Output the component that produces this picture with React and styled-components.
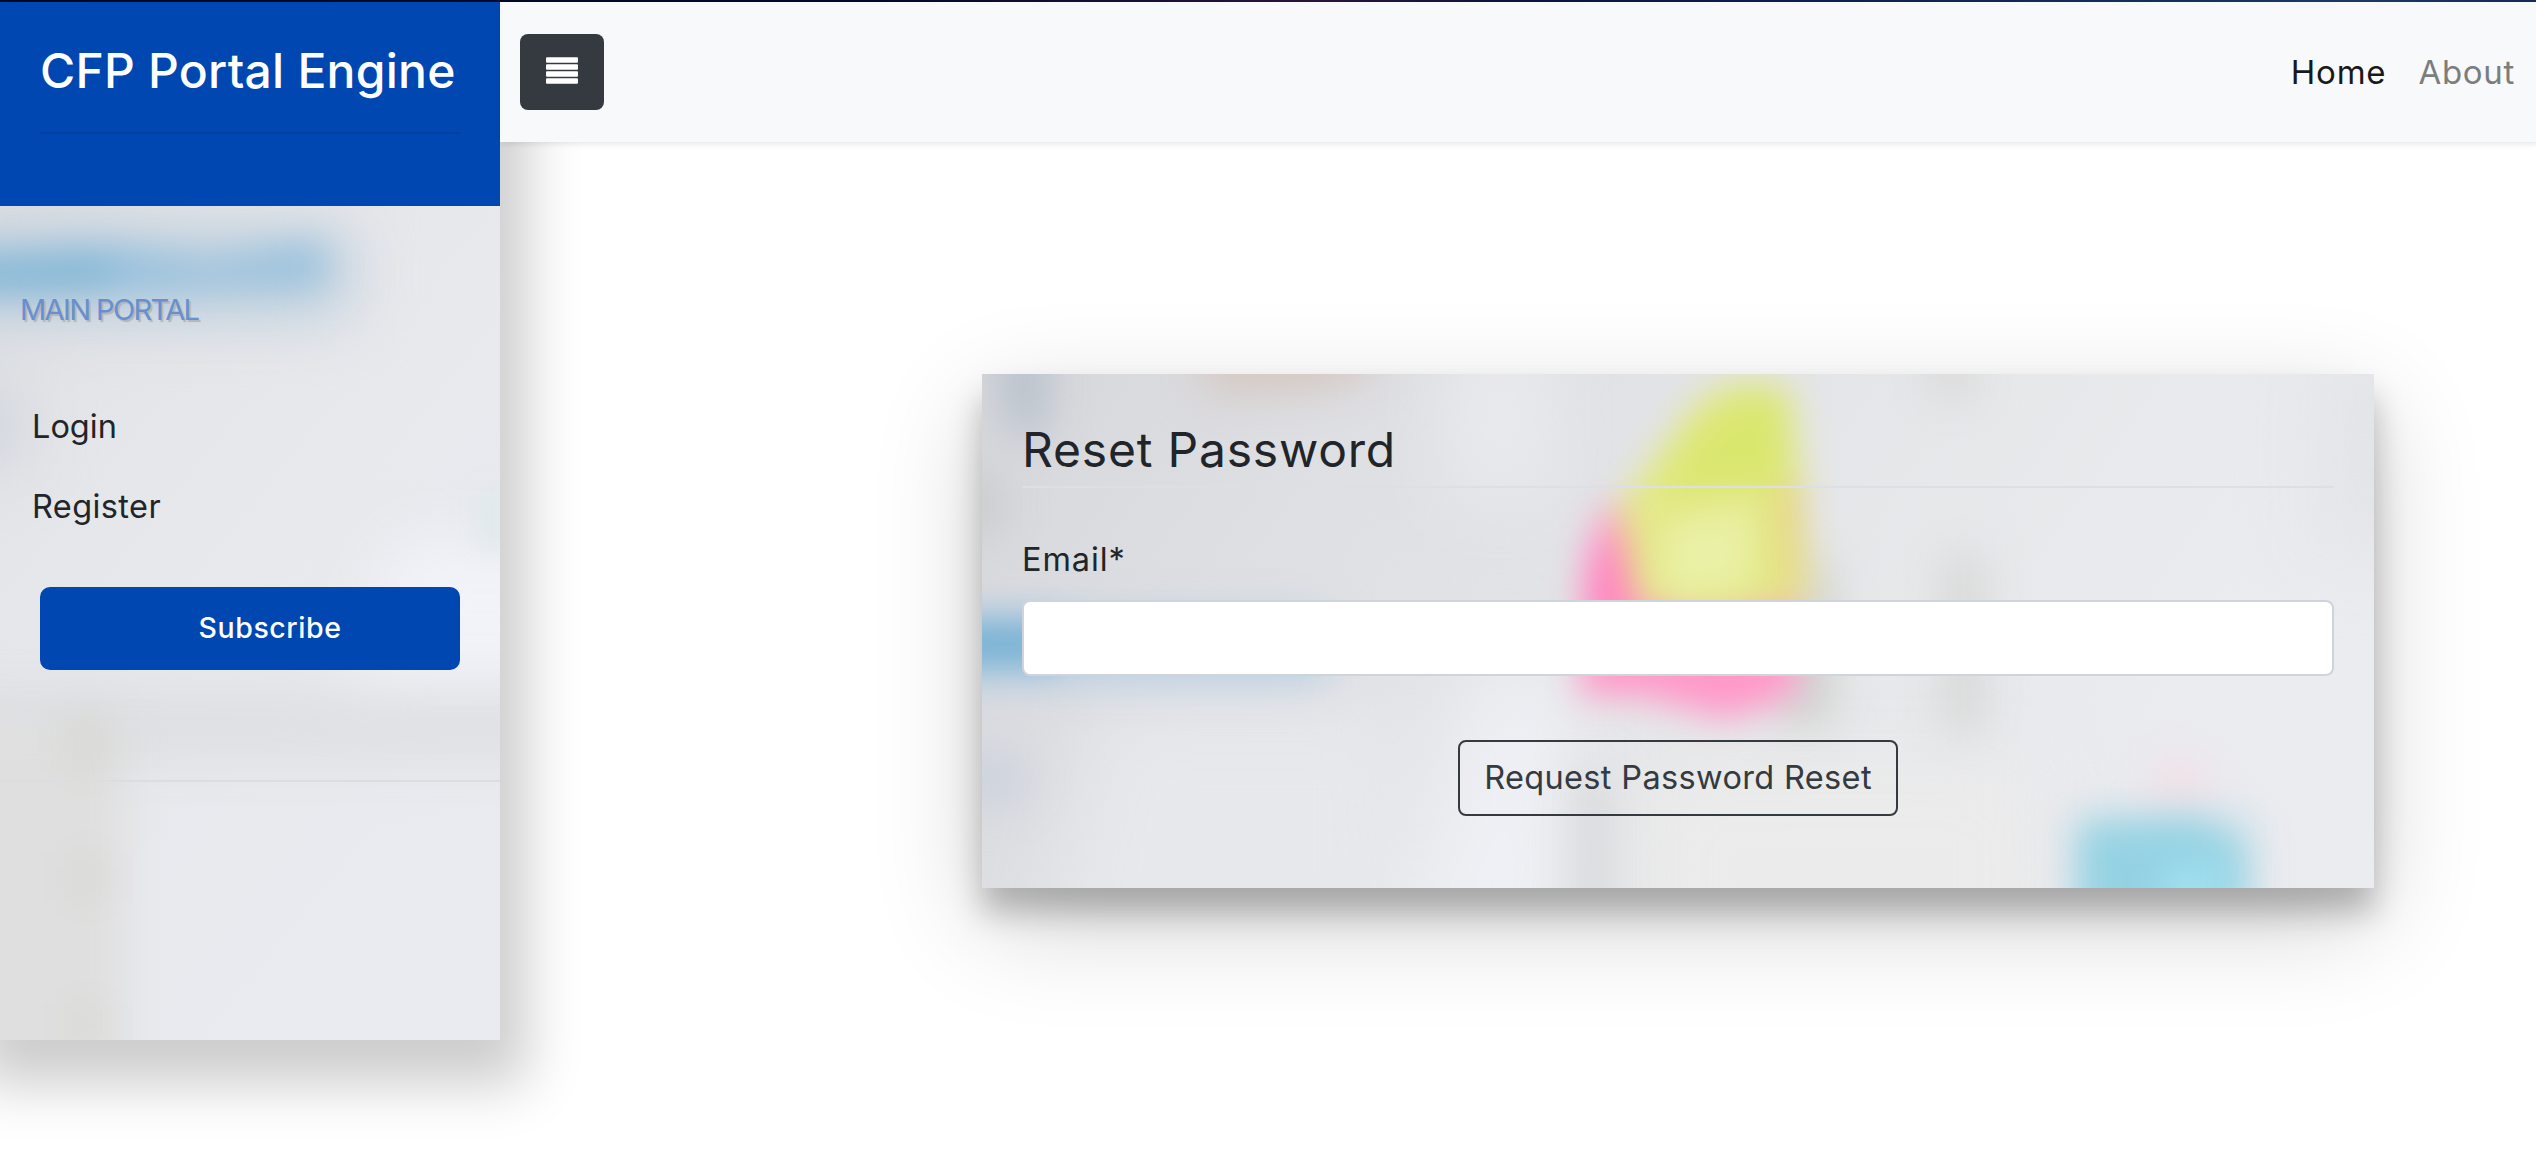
import React from "react";
import styled, { createGlobalStyle } from "styled-components";

const Global = createGlobalStyle`
  *, *::before, *::after { box-sizing: border-box; }
  html, body, #root { height: 100%; }
  body {
    margin: 0;
    background: #fff;
    color: #212529;
    font-family: Inter, "Open Sans", sans-serif;
    font-size: 32.5px;
    line-height: 48px;
    overflow: hidden;
  }
`;

const Page = styled.div`
  display: grid;
  grid-template-columns: 500px 1fr;
  grid-template-rows: 2px 1160px;
`;

const TopStrip = styled.div`
  grid-column: 1 / -1;
  background: linear-gradient(90deg, #010a2c 0%, #030a30 35%, #2a1440 52%, #0d1440 60%, #14305e 85%, #1c3a68 93%, #162b55 100%);
`;

const Sidebar = styled.nav`
  position: relative;
  height: 1038px;
  isolation: isolate;
  box-shadow: 2px 20px 52px 25px rgba(0, 0, 0, 0.2);
`;

const Backdrop = styled.svg`
  position: absolute;
  inset: 0;
  z-index: -1;
  width: 100%;
  height: 100%;

  filter {
    color-interpolation-filters: sRGB;
  }
`;

const Brand = styled.header`
  height: 204px;
  padding: 40px;
  background: #0047b1;
`;

const BrandTitle = styled.h3`
  margin: 0 0 32px;
  color: #fff;
  font-size: 48px;
  font-weight: 540;
  line-height: 58px;
  letter-spacing: 0.25px;
  white-space: nowrap;
`;

const Rule = styled.hr`
  height: 2px;
  margin: 0;
  border: 0;
  background: ${(p) => p.$color};
`;

const SectionTitle = styled.p`
  margin: 0;
  padding: 80px 20px 0;
  color: #6690cf;
  font-size: 29px;
  letter-spacing: -1.6px;
  text-shadow: 2px 2px 1px #b4b4b8;
`;

const Menu = styled.ul`
  display: flex;
  flex-direction: column;
  margin: 0;
  padding: 53px 0 15px;
  list-style: none;
`;

const MenuItem = styled.li`
  height: 80px;
  padding: 16px 32px;
  letter-spacing: ${(p) => p.$tracking}px;
`;

const Subscribe = styled.button`
  display: block;
  width: 420px;
  height: 83px;
  margin: 25px 40px 110px;
  padding: 0 0 2px 40px;
  border: 0;
  border-radius: 10px;
  background: #0047b1;
  color: #fff;
  font: 500 28.5px Inter, sans-serif;
  letter-spacing: 0.55px;
`;

const Main = styled.div`
  display: flex;
  flex-direction: column;
  align-items: flex-start;
  min-width: 0;
`;

const Navbar = styled.header`
  position: relative;
  z-index: 1;
  display: flex;
  align-items: center;
  width: 100%;
  height: 140px;
  padding: 0 21px 0 20px;
  background: #f8f9fb;
  box-shadow: 2px 2px 6px rgba(0, 0, 0, 0.1);
`;

const Toggle = styled.button`
  display: grid;
  place-items: center;
  width: 84px;
  height: 76px;
  padding: 0 0 4px;
  border: 0;
  border-radius: 8px;
  background: #343a40;
`;

const Links = styled.div`
  display: flex;
  gap: 32px;
  margin-left: auto;
`;

const NavLink = styled.a`
  color: ${(p) => (p.$active ? "#181919" : "#7c7d7d")};
  font-size: 33px;
  letter-spacing: ${(p) => (p.$active ? 0.8 : 0.7)}px;
`;

const Card = styled.form`
  position: relative;
  isolation: isolate;
  display: flex;
  flex-direction: column;
  width: 1392px;
  height: 514px;
  margin: 232px 0 0 482px;
  padding: 40px;
  box-shadow: 0 24px 30px rgba(0, 0, 0, 0.24), 0 34px 100px rgba(0, 0, 0, 0.19);
`;

const Legend = styled.h2`
  height: 74px;
  margin: 0 0 36px;
  padding-top: 7px;
  border-bottom: 2px solid #dcdfe6;
  font-size: 48px;
  font-weight: 420;
  line-height: 58px;
  letter-spacing: 0.8px;
`;

const Label = styled.label`
  height: 60px;
  margin-bottom: 16px;
  padding-top: 12px;
  letter-spacing: 0.9px;
`;

const Input = styled.input`
  height: 76px;
  border: 2px solid #ced4da;
  border-radius: 8px;
  background: #fff;
`;

const Submit = styled.button`
  align-self: center;
  width: 440px;
  height: 76px;
  margin-top: 64px;
  padding: 0 0 2px;
  border: 2px solid #343a40;
  border-radius: 8px;
  background: transparent;
  color: #343a40;
  font: 420 32.5px Inter, sans-serif;
  letter-spacing: 0.35px;
  white-space: nowrap;
`;

function MenuIcon() {
  return (
    <svg width="32" height="27" viewBox="0 0 32 27" fill="#fff">
      {[0.3, 7.3, 14.3, 21.3].map((y) => (
        <rect key={y} y={y} width="32" height="5.4" rx="1" />
      ))}
    </svg>
  );
}

function SidebarPhoto() {
  return (
    <Backdrop viewBox="0 0 500 1038" preserveAspectRatio="none">
      <defs>
        <linearGradient id="sideBase" x1="0" y1="0" x2="0.6" y2="1">
          <stop offset="0" stopColor="#dadade" />
          <stop offset="0.35" stopColor="#e4e5e8" />
          <stop offset="0.6" stopColor="#e8e9ed" />
          <stop offset="1" stopColor="#eaebf0" />
        </linearGradient>
        <filter id="sideTint" x="-50%" y="-50%" width="200%" height="200%"><feGaussianBlur stdDeviation="12" /></filter>
        <filter id="sideSoft" x="-50%" y="-100%" width="200%" height="300%"><feGaussianBlur stdDeviation="19" /></filter>
        <filter id="sideWide" x="-50%" y="-100%" width="200%" height="300%"><feGaussianBlur stdDeviation="32" /></filter>
      </defs>
      <rect width="500" height="1038" fill="url(#sideBase)" />
      <g filter="url(#sideWide)">
        <path d="M-60 230H350V315H-60Z" fill="#bfd0de" />
        <path d="M-60 390H20V460H-60Z" fill="#ccd3dd" />
        <path d="M400 540H600V680H340Z" fill="#f2f3f9" />
        <path d="M-100 705H600V742H-100Z" fill="#d4d6d7" />
      </g>
      <g filter="url(#sideSoft)">
        <path d="M-40 256L100 246L210 260L325 242V280L120 288L-40 292Z" fill="#90bedd" />
        <path d="M-40 260H110V284H-40Z" fill="#76b0d2" />
        <path d="M-60 720H125V1100H-60Z" fill="#dfdfdf" />
        <path d="M65 710H110V770H65Z M70 850H105V900H70Z M70 1000H105V1040H70Z" fill="#d8d8d5" />
      </g>
      <rect x="474" y="486" width="60" height="62" rx="10" fill="#e1e9ec" filter="url(#sideTint)" />
    </Backdrop>
  );
}

function CardPhoto() {
  return (
    <Backdrop viewBox="0 0 1392 514" preserveAspectRatio="none">
      <defs>
        <linearGradient id="cardBase" x1="0" y1="0" x2="1" y2="0.25">
          <stop offset="0" stopColor="#d6d7db" />
          <stop offset="0.25" stopColor="#dedfe3" />
          <stop offset="0.45" stopColor="#e2e3e7" />
          <stop offset="0.7" stopColor="#e7e8ea" />
          <stop offset="1" stopColor="#ebecf0" />
        </linearGradient>
        <filter id="edge" x="-60%" y="-60%" width="220%" height="220%"><feGaussianBlur stdDeviation="17" /></filter>
        <filter id="soft" x="-60%" y="-60%" width="220%" height="220%"><feGaussianBlur stdDeviation="22" /></filter>
        <filter id="wide" x="-60%" y="-60%" width="220%" height="220%"><feGaussianBlur stdDeviation="40" /></filter>
      </defs>
      <rect width="1392" height="514" fill="url(#cardBase)" />
      <g filter="url(#wide)">
        <path d="M480 -40L560 -40V120H470Z" fill="#ebecf1" />
        <path d="M120 330H420V600H60Z" fill="#e7e8eb" />
        <path d="M490 290H590V600H420Z" fill="#eff0f5" />
        <path d="M660 390H1060V600H660Z" fill="#ebebeb" />
        <path d="M1340 -20H1440V180H1340Z" fill="#e2e3e7" />
      </g>
      <g filter="url(#soft)">
        <path d="M15 -60H65V60H25Z" fill="#b6bfca" />
        <path d="M-20 100H15V160H-20Z" fill="#c6c7c9" />
        <path d="M220 -60H390V5L330 18L220 22Z" fill="#d4c8c2" />
        <path d="M-40 240H345V308H-40Z" fill="#bfd2e3" />
        <path d="M-40 380H45V430H-40Z" fill="#ccd2dd" />
        <path d="M825 190H850V350H795V320Z" fill="#cfd1ce" />
        <path d="M598 400H622V580H598Z" fill="#cdd0d0" />
        <path d="M962 180H1000V360H962Z" fill="#d6d6d5" />
        <path d="M950 -50H990V25H950Z" fill="#d8d8d7" />
        <path d="M1170 390H1225V430H1170Z" fill="#f3dde3" />
        <path d="M1090 440H1270V600H1090Z" fill="#c9e0e9" />
      </g>
      <g filter="url(#edge)">
        <path d="M-40 248H80V292H-40Z" fill="#76b0d3" />
        <path d="M90 262H340V284H90Z" fill="#aecbe1" />
        <path d="M622 130L602 190L598 322L660 322L745 345L815 320V220Z" fill="#ff98c8" />
        <path d="M617 165L604 240L640 260V180Z" fill="#ff80be" />
        <path d="M715 26L760 6L808 14L822 130L828 230L720 250L655 230L636 130Z" fill="#e3e886" />
        <path d="M715 50L765 16L806 22V110L676 120Z" fill="#dae76f" />
        <path d="M680 150L770 130V215L680 225Z" fill="#eaf0a6" />
        <path d="M795 110H820V225H805Z" fill="#e8d080" />
        <path d="M1100 452L1215 446L1260 470V600H1100Z" fill="#94d2e3" />
        <path d="M1180 490H1240V600H1180Z" fill="#a0e0ef" />
      </g>
    </Backdrop>
  );
}

export default function App() {
  return (
    <>
      <Global />
      <Page>
        <TopStrip />
        <Sidebar>
          <SidebarPhoto />
          <Brand>
            <BrandTitle>CFP Portal Engine</BrandTitle>
            <Rule $color="rgba(0, 0, 0, 0.1)" />
          </Brand>
          <SectionTitle>MAIN PORTAL</SectionTitle>
          <Menu>
            <MenuItem $tracking={0}>Login</MenuItem>
            <MenuItem $tracking={0.4}>Register</MenuItem>
          </Menu>
          <Subscribe>Subscribe</Subscribe>
          <Rule $color="#dcdddf" />
        </Sidebar>
        <Main>
          <Navbar>
            <Toggle aria-label="Toggle sidebar">
              <MenuIcon />
            </Toggle>
            <Links>
              <NavLink $active>Home</NavLink>
              <NavLink>About</NavLink>
            </Links>
          </Navbar>
          <Card>
            <CardPhoto />
            <Legend>Reset Password</Legend>
            <Label htmlFor="email">Email*</Label>
            <Input id="email" />
            <Submit type="button">Request Password Reset</Submit>
          </Card>
        </Main>
      </Page>
    </>
  );
}
